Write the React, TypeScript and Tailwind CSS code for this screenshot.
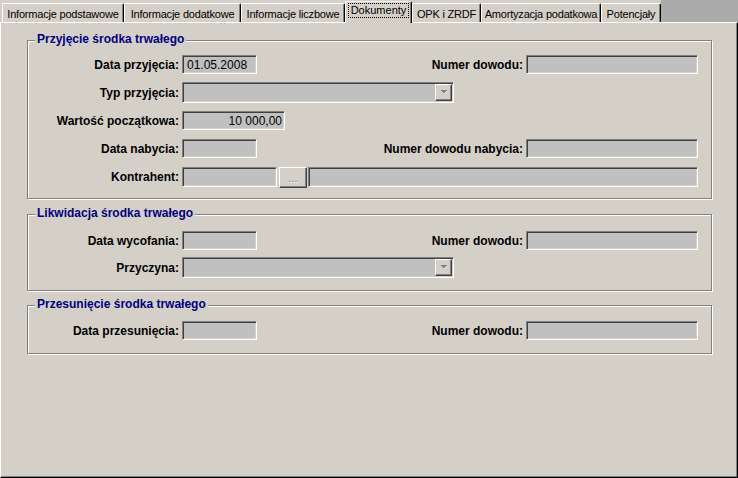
import type { ReactNode } from "react";

// --- Tabs ---
const tabs = [
  { label: "Informacje podstawowe", width: "w-[122px]" },
  { label: "Informacje dodatkowe", width: "w-[117px]" },
  { label: "Informacje liczbowe", width: "w-[104px]" },
  { label: "Dokumenty", width: "w-[67px]", active: true },
  { label: "OPK i ZRDF", width: "w-[69px]" },
  { label: "Amortyzacja podatkowa", width: "w-[120px]" },
  { label: "Potencjały", width: "w-[60px]" },
];

const raised =
  "border border-t-white border-l-white border-b-[#404040] border-r-[#404040] bg-[#d4d0c8] shadow-[inset_-1px_-1px_0_#808080]";

const Field = ({
  className = "",
  children,
}: {
  className?: string;
  children?: ReactNode;
}) => (
  <div
    className={`flex shrink-0 items-center border border-t-[#808080] border-l-[#808080] border-b-white border-r-white bg-[#c0c0c0] text-[12px] leading-none text-black shadow-[inset_1px_1px_0_#404040,inset_-1px_-1px_0_#d4d0c8] ${className}`}
  >
    {children}
  </div>
);

const Label = ({ children }: { children: ReactNode }) => (
  <span className="w-[151px] shrink-0 text-right text-[12px] font-bold leading-none">
    {children}
  </span>
);

const RightPart = ({ label }: { label: string }) => (
  <div className="ml-auto flex items-center gap-[3px]">
    <span className="text-[12px] font-bold leading-none">{label}</span>
    <Field className="h-[19px] w-[172px]" />
  </div>
);

const Combo = () => (
  <Field className="ml-[3px] h-[21px] w-[272px] justify-end pr-[1px]">
    <div className={`flex h-[17px] w-[17px] items-center justify-center ${raised}`}>
      <svg width="8" height="5" viewBox="0 0 8 5">
        <path d="M1.5 1h6L4.5 4z" fill="#ffffff" />
        <path d="M0.5 0h7L4 3.5z" fill="#808080" />
      </svg>
    </div>
  </Field>
);

const Group = ({
  title,
  className = "",
  children,
}: {
  title: string;
  className?: string;
  children: ReactNode;
}) => (
  <div
    className={`relative flex w-[685px] flex-col border border-[#808080] pr-[13px] shadow-[inset_1px_1px_0_#fff,1px_1px_0_#fff] ${className}`}
  >
    <span className="absolute -top-[9px] left-[7px] bg-[#d4d0c8] px-[2px] text-[12px] font-bold leading-[14px] text-[#000080]">
      {title}
    </span>
    {children}
  </div>
);

export default function App() {
  return (
    <div className="flex h-[478px] w-[738px] flex-col bg-[#d4d0c8] font-['Liberation_Sans',Arial,sans-serif] text-black">
      {/* Tab strip */}
      <div className="flex h-[22px] shrink-0 items-end pl-[2px]">
        {tabs.map((t) =>
          t.active ? (
            <div
              key={t.label}
              className={`relative z-10 -mb-[1px] flex h-[22px] shrink-0 justify-center rounded-t-[2px] border-t border-l border-r border-t-white border-l-white border-r-black bg-[#d4d0c8] pt-[1px] shadow-[inset_-1px_0_0_#808080] ${t.width}`}
            >
              <span className="h-[15px] whitespace-nowrap border border-dotted border-black px-[2px] text-[11px] leading-[13px]">
                {t.label}
              </span>
            </div>
          ) : (
            <div
              key={t.label}
              className={`flex h-[19px] shrink-0 items-center justify-center overflow-hidden whitespace-nowrap rounded-t-[2px] border-t border-l border-r border-t-white border-l-white border-r-black pt-[2px] text-[11px] leading-none tracking-[-0.2px] shadow-[inset_-1px_0_0_#808080] ${t.width}`}
            >
              {t.label}
            </div>
          ),
        )}
        <div className="flex-1 self-stretch bg-[#ababab]" />
      </div>

      {/* Panel */}
      <div className="flex flex-1 flex-col border border-t-white border-l-white border-r-black border-b-black pl-[26px] pt-[17px] shadow-[inset_-1px_-1px_0_#808080]">
        <Group title="Przyjęcie środka trwałego" className="pt-[14px] pb-[11px]">
          <div className="flex h-[19px] items-center">
            <Label>Data przyjęcia:</Label>
            <Field className="ml-[3px] h-[19px] w-[75px] pl-[4px]">01.05.2008</Field>
            <RightPart label="Numer dowodu:" />
          </div>
          <div className="mt-[8px] flex h-[21px] items-center">
            <Label>Typ przyjęcia:</Label>
            <Combo />
          </div>
          <div className="mt-[8px] flex h-[19px] items-center">
            <Label>Wartość początkowa:</Label>
            <Field className="ml-[3px] h-[19px] w-[103px] justify-end pr-[2px]">10 000,00</Field>
          </div>
          <div className="mt-[9px] flex h-[19px] items-center">
            <Label>Data nabycia:</Label>
            <Field className="ml-[3px] h-[19px] w-[75px]" />
            <RightPart label="Numer dowodu nabycia:" />
          </div>
          <div className="mt-[9px] flex h-[20px] items-center">
            <Label>Kontrahent:</Label>
            <Field className="ml-[3px] h-[20px] w-[95px]" />
            <button
              className={`ml-[2px] flex h-[21px] w-[28px] shrink-0 items-end justify-center pb-[3px] text-[11px] leading-none text-[#808080] [text-shadow:1px_1px_0_#fff] ${raised}`}
            >
              ...
            </button>
            <Field className="ml-[1px] h-[20px] flex-1" />
          </div>
        </Group>

        <Group title="Likwidacja środka trwałego" className="mt-[15px] pt-[16px] pb-[12px]">
          <div className="flex h-[19px] items-center">
            <Label>Data wycofania:</Label>
            <Field className="ml-[3px] h-[19px] w-[75px]" />
            <RightPart label="Numer dowodu:" />
          </div>
          <div className="mt-[7px] flex h-[21px] items-center">
            <Label>Przyczyna:</Label>
            <Combo />
          </div>
        </Group>

        <Group title="Przesunięcie środka trwałego" className="mt-[14px] pt-[15px] pb-[13px]">
          <div className="flex h-[19px] items-center">
            <Label>Data przesunięcia:</Label>
            <Field className="ml-[3px] h-[19px] w-[75px]" />
            <RightPart label="Numer dowodu:" />
          </div>
        </Group>
      </div>
    </div>
  );
}
